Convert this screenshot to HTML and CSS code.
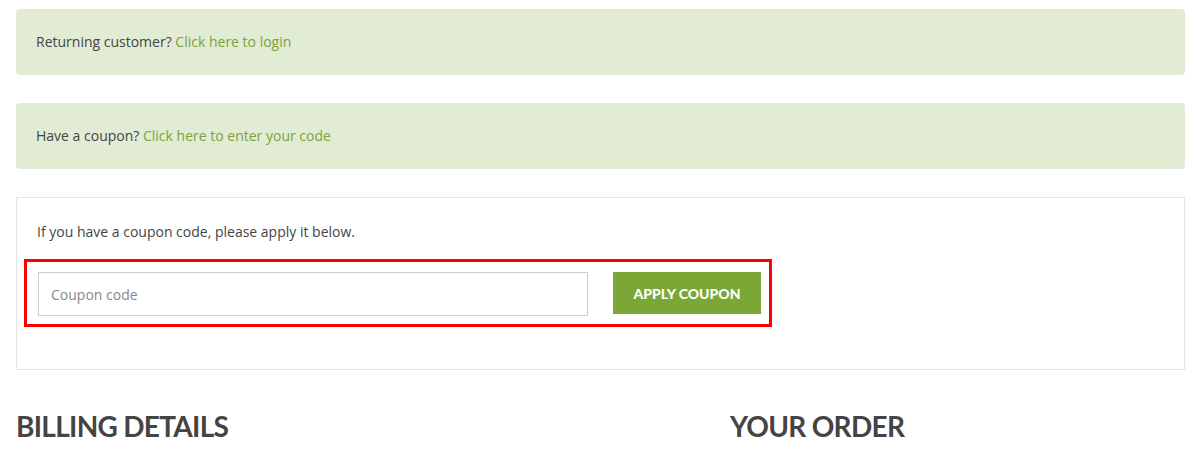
FILE: index.html
```html
<!DOCTYPE html>
<html>
<head>
  <title>Checkout</title>
  <meta charset="UTF-8">
  <link rel="stylesheet" href="styles.css">
</head>
<body>
  <div class="checkout">
    <div class="notice">
      Returning customer? <a href="#" class="notice-link">Click here to login</a>
    </div>

    <div class="notice">
      Have a coupon? <a href="#" class="notice-link">Click here to enter your code</a>
    </div>

    <form class="coupon-box">
      <p class="coupon-hint">If you have a coupon code, please apply it below.</p>
      <div class="coupon-row">
        <input type="text" class="coupon-input" placeholder="Coupon code">
        <button type="button" class="coupon-btn">Apply coupon</button>
      </div>
    </form>

    <div class="columns">
      <h3 class="section-title">Billing details</h3>
      <h3 class="section-title">Your order</h3>
    </div>
  </div>
</body>
</html>
```

FILE: styles.css
```css
body {
  margin: 0;
  font-family: "Open Sans", Arial, sans-serif;
  font-size: 14px;
  color: #444;
  background-color: #fff;
}

.checkout {
  padding: 9px 15px 0 16px;
}

.notice {
  background-color: #e2ecd5;
  border-radius: 4px;
  padding: 22px 20px;
  line-height: 22px;
  margin-bottom: 28px;
}

.notice-link {
  color: #7aa33a;
  text-decoration: none;
}

.coupon-box {
  border: 1px solid #e6e6e6;
  padding: 24px 20px 42px 7px;
  margin: 0;
}

.coupon-hint {
  margin: 0 0 17px 13px;
  line-height: 20px;
}

/* highlighted coupon field + button */
.coupon-row {
  display: flex;
  align-items: flex-start;
  width: fit-content;
  border: 3px solid #f00;
  padding: 10px 8px 8px 11px;
}

.coupon-input {
  width: 550px;
  height: 44px;
  box-sizing: border-box;
  border: 1px solid #ccc;
  padding: 0 12px;
  font-family: "Open Sans", Arial, sans-serif;
  font-size: 14px;
  color: #444;
  outline: none;
}

.coupon-input::placeholder {
  color: #888;
}

.coupon-btn {
  margin-left: 25px;
  width: 148px;
  height: 42px;
  border: none;
  background-color: #7ba736;
  color: #fff;
  font-family: Lato, sans-serif;
  font-weight: 900;
  font-size: 14px;
  text-transform: uppercase;
  cursor: pointer;
}

.columns {
  display: grid;
  grid-template-columns: 714px 1fr;
  margin-top: 38px;
}

.section-title {
  margin: 0;
  font-family: Lato, sans-serif;
  font-weight: 700;
  font-size: 28px;
  line-height: 36px;
  letter-spacing: -0.7px;
  text-transform: uppercase;
  color: #444;
}
```
